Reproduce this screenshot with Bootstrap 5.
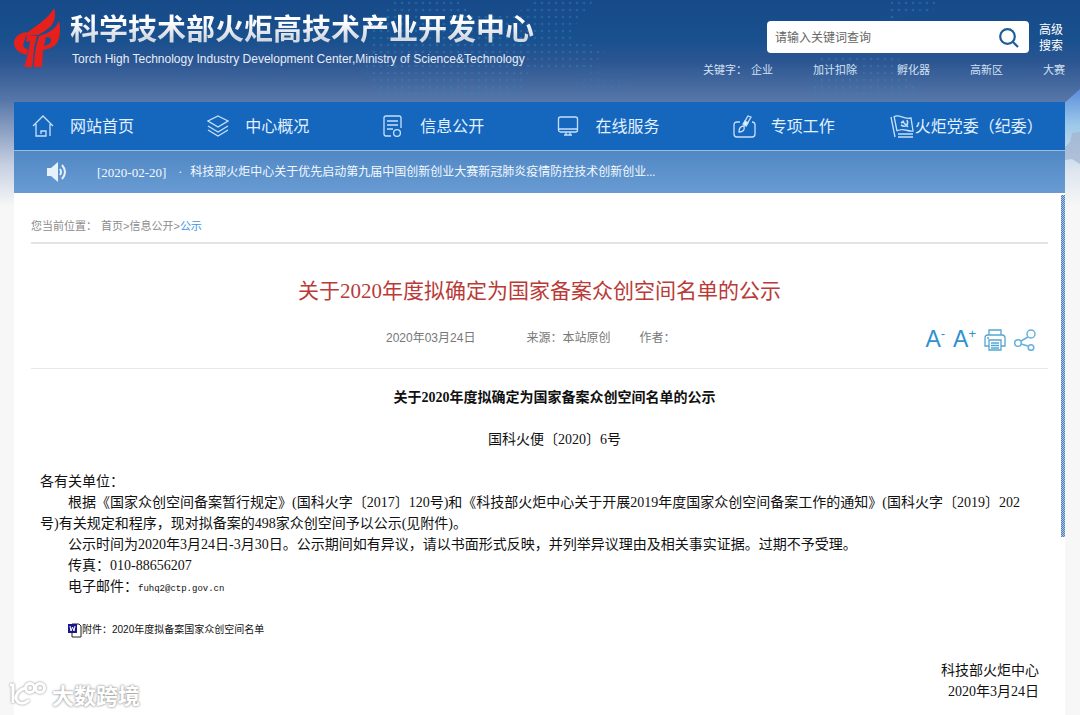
<!DOCTYPE html>
<html lang="zh-CN">
<head>
<meta charset="utf-8">
<meta name="viewport" content="width=device-width, initial-scale=1">
<title>关于2020年度拟确定为国家备案众创空间名单的公示</title>
<link rel="stylesheet" href="https://cdn.jsdelivr.net/npm/bootstrap@5.3.0/dist/css/bootstrap.min.css">
<style>
body{background:#f7f7f7;font-family:"Liberation Serif","Noto Sans CJK SC",serif;font-size:14px;line-height:21px;color:#111;overflow-x:hidden}
a{color:inherit;text-decoration:none}
.sky{background:linear-gradient(#174a88 0,#19508e 40px,#2c5692 62px,#5676a8 100px,#8b9fc3 130px,#c6d0e1 165px,#f7f7f7 207px)}
.sky-map{position:absolute;top:0;left:0;width:100%;height:102px;z-index:0}
.globe{position:absolute;top:85px;right:0;width:20px;height:122px}
.site{margin:0 15px 0 14px;position:relative}
.masthead{height:102px;color:#fff}
.sans{font-family:"Liberation Sans","Noto Sans CJK SC",sans-serif}
.brand-name{font:bold 29px/38px "Noto Sans CJK SC",sans-serif;background:linear-gradient(#fff 35%,#d3d9e2 80%);-webkit-background-clip:text;background-clip:text;color:transparent;margin:0;white-space:nowrap}
.brand-en{font-size:12px;line-height:16px;color:#e4edf8;margin:5px 0 0 2px;white-space:nowrap}
.brand-text{padding:8px 0 0 8px}
.brand-logo{margin-top:8px}
.find{width:262px;height:32px;background:#fff;border-radius:4px}
.find input{border:0;outline:0;background:transparent;font-size:12px;min-width:0;padding:2px 8px 0;color:#555}
.find input::placeholder{color:#666;opacity:1}
.find button{border:0;background:none;padding:0 10px}
.adv{font-size:12px;line-height:16px;margin:1px 2px 0 10px;flex:none}
.keys{font-size:11px;line-height:16px;gap:40px;color:#d5e2f2;white-space:nowrap;margin-top:8px}
.find-area{padding-top:21px}
.mainnav{background:#1567be;height:48px;font-size:16px;color:#e2f0ff}
.mainnav a{height:48px;padding-left:18px;white-space:nowrap}
.mainnav svg{flex:none;margin-right:16px}
.mainnav .wide svg{margin-right:14px}
.mainnav .party{padding-left:0}
.mainnav .party svg{margin-right:1px}
.line{fill:none;stroke:#c7e0fa;stroke-width:1.3}
.ticker{background:linear-gradient(#5088c4,#699bd3);border-top:1px solid #98bee6;height:43px;font-size:12px;color:#f4f9ff;padding-left:32px}
.ticker time{margin:0 12px 0 29px;font-size:13px}
.panel{background:#fff;padding:0 17px 0 17px;min-height:522px}
.side{position:absolute;right:0;top:2px;width:4px;height:342px;background:repeating-conic-gradient(#4c80bd 0 25%,#a9c5e2 0 50%) 0 0/2px 2px}
.crumbs{font-size:11px;line-height:16px;color:#8b8b8b;padding:25px 0 8px;border-bottom:2px solid #e3e3e3}
.crumbs .here{color:#3b95e0}
.headline{font-size:21px;line-height:30px;font-weight:400;color:#b93b38;margin:32px 0 16px}
.meta{font-size:12px;line-height:32px;color:#777;padding-bottom:14px;border-bottom:1px solid #e8e8e8}
.meta .when{margin-left:355px}
.meta .from{margin:0 29px 0 51px}
.tools{margin-right:12px;padding-top:2px}
.tools button{border:0;background:none;padding:0;line-height:24px}
.tools .sz{font-size:23px;color:#2f92d0}
.tools sup{font-size:13px;top:-9px}
.article{padding:18px 9px 0}
.article p{margin:0}
.article .para{text-indent:28px;padding-right:4px}
.centred{text-align:center;padding-left:30px}
.doc-title{font-size:14px;line-height:21px;font-weight:bold;margin:0 0 21px}
.article .salute{margin-top:21px}
.mail{font:9px "Liberation Mono",monospace}
.article .attach{font-size:10px;padding-left:28px;margin-top:22px}
.water{position:absolute;left:8px;top:678px;color:#fff;font:bold 22px/32px "Noto Sans CJK SC",sans-serif;text-shadow:0 0 2px #999,0 0 3px #aaa;pointer-events:none}
.water svg{filter:drop-shadow(0 0 1px #888)}
</style>
</head>
<body class="position-relative">
<div class="sky">
<svg class="sky-map" aria-hidden="true"><defs><pattern id="dots" width="7" height="7" patternUnits="userSpaceOnUse"><circle cx="3" cy="3" r="1.3" fill="#2e8ac8"/></pattern></defs>
<g fill="url(#dots)" opacity=".4"><path d="M395 0h62l20 16 45-6 12-10h60l-22 30 4 12 32 6-18 20h-60l-10 30H380l-15-30 8-40z"/><path d="M890 0h50l-8 12h-24l-22 10zM820 54h76l16 28 8 20H812z"/><path d="M590 66h14v12h22v20h-56z" opacity=".5"/></g></svg>
<svg class="globe" viewBox="0 0 20 122" preserveAspectRatio="none" aria-hidden="true"><defs><linearGradient id="g" x1="0" y1="0" x2="0" y2="1"><stop offset="0" stop-color="#5c8ddb"/><stop offset=".3" stop-color="#9bc8e9"/><stop offset=".7" stop-color="#dfe6ef"/><stop offset="1" stop-color="#f7f7f7"/></linearGradient></defs><path d="M0 22 20 4v118H0z" fill="url(#g)"/><path d="M5 62l5-5 2-9 8-1v32l-8-5-7 1z" fill="#a3b2cd" opacity=".7"/></svg>
<div class="site">
<header class="masthead d-flex justify-content-between">
  <div class="d-flex align-items-start">
    <svg class="brand-logo" width="48" height="60" viewBox="0 0 48 60" aria-hidden="true"><g fill="#e8201c"><path d="M40 0C42 7 41 13 37 18 33 22 28 25 24 27L12 28 13 25C18 20 34 12 40 0z"/><path d="M13 24C5 25 0 29 0 35c0 5 4 10 13 12l1-6c-4 0-6-3-4-7 1-3 2-5 3-10z"/><path d="M13 28h11c-2 4-3 8-4 13l-1 18h-9c3-8 5-16 6-26l-4 1z"/><path d="M45 13c2 8 1 17-2 22-3 4-8 6-14 7l-1 17h-8c0-11 2-22 5-31 8-2 17-7 20-15zM32 29l-2 9c5-1 7-3 7-6 0-2-2-3-5-3z" fill-rule="evenodd"/></g><path d="M24 27c-3 8-4 18-5 32" stroke="#254f8d" fill="none"/></svg>
    <div class="brand-text"><h1 class="brand-name">科学技术部火炬高技术产业开发中心</h1><p class="brand-en sans">Torch High Technology Industry Development Center,Ministry of Science&amp;Technology</p></div>
  </div>
  <div class="find-area sans">
    <div class="d-flex justify-content-end">
      <form class="find d-flex" role="search"><input class="flex-grow-1" type="text" placeholder="请输入关键词查询" aria-label="请输入关键词查询"><button type="button" aria-label="搜索"><svg width="20" height="20" viewBox="0 0 20 20" fill="none" stroke="#1a5f9c" stroke-width="2.2"><circle cx="8.5" cy="8.5" r="7.3"/><path d="m14 14 5 5"/></svg></button></form>
      <a href="#" class="adv">高级<br>搜索</a>
    </div>
    <div class="keys d-flex"><span>关键字：<a href="#" class="ms-1">企业</a></span><a href="#">加计扣除</a><a href="#">孵化器</a><a href="#">高新区</a><a href="#">大赛</a></div>
  </div>
</header>
<nav class="mainnav row row-cols-6 g-0">
  <a href="#" class="col d-flex align-items-center"><svg class="line" width="22" height="24" viewBox="0 0 22 24"><path d="M1 12 11 2l10 10M4 10v12h10v-5H9v3M18 10v12"/></svg>网站首页</a>
  <a href="#" class="col d-flex align-items-center"><svg class="line" width="22" height="24" viewBox="0 0 22 24"><path d="m11 2 10 5-10 6L1 7zM1 12l10 6 10-6M1 16l10 6 10-6"/></svg>中心概况</a>
  <a href="#" class="col d-flex align-items-center"><svg class="line" width="22" height="24" viewBox="0 0 22 24"><path d="M9 22H4q-2 0-2-2V4q0-2 2-2h13q2 0 2 2v10M5 7h11M5 11h11M5 15h6"/><circle cx="15" cy="19" r="3.4"/></svg>信息公开</a>
  <a href="#" class="col d-flex align-items-center"><svg class="line" width="22" height="24" viewBox="0 0 22 24"><rect x="1.500" y="3" width="19" height="15" rx="2"/><path d="M2 15h18M9 18v3M13 18v3M7 21h8"/></svg>在线服务</a>
  <a href="#" class="wide col d-flex align-items-center"><svg class="line" width="24" height="24" viewBox="0 0 24 24"><path d="M7 8H4q-3 0-3 3v9q0 3 3 3h15q3 0 3-3v-9q0-3-3-3M6 18c0-4 2-6 5-6 1 4-1 6-5 6zM11 12l2-3"/><path d="m12 7 3-5 3 1-4 7z" /><path d="m12 7-2 3 3 2 2-3z" fill="#e7f4ff"/></svg>专项工作</a>
  <a href="#" class="party col d-flex align-items-center"><svg class="line" width="24" height="25" viewBox="0 0 24 25"><path d="m1 3 4 20M4 2l3 15M4 3c5-4 9 3 17 1l2 13c-6 1-10-4-16 0M8 20h15M8 23h15"/><path d="m11 9 3-2M12 7l6 6M17 6c2 5-2 8-6 5" stroke-width="1.600"/></svg>火炬党委（纪委）</a>
</nav>
<div class="ticker d-flex align-items-center"><svg width="22" height="20" viewBox="0 0 22 20"><path d="M1 6h4l7-6v20l-7-6H1z" fill="#e6f1fc"/><path d="M14 7q2 3 0 6M16 3q6 7 0 14" fill="none" stroke="#e6f1fc" stroke-width="2"/></svg><time>[2020-02-20]</time><span>·</span><a href="#" class="ms-2 text-truncate">科技部火炬中心关于优先启动第九届中国创新创业大赛新冠肺炎疫情防控技术创新创业...</a></div>
<main class="panel position-relative">
  <div class="side"></div>
  <nav class="crumbs sans" aria-label="当前位置"><span>您当前位置：</span><a href="#" class="ms-1">首页</a>&gt;<a href="#">信息公开</a>&gt;<a href="#" class="here">公示</a></nav>
  <h2 class="headline text-center">关于2020年度拟确定为国家备案众创空间名单的公示</h2>
  <div class="meta sans d-flex align-items-center">
    <span class="when">2020年03月24日</span><span class="from">来源：本站原创</span><span>作者：</span>
    <div class="tools d-flex align-items-center gap-2 ms-auto">
      <button type="button" class="sz" aria-label="缩小字号">A<sup>-</sup></button><button type="button" class="sz" aria-label="放大字号">A<sup>+</sup></button>
      <button type="button" aria-label="打印"><svg width="22" height="22" viewBox="0 0 22 22" fill="none" stroke="#55a5d4" stroke-width="1.300"><path d="M5 6V1h12v5M5 17H1V9q0-3 3-3h14q3 0 3 3v8h-4M5 11h12v10H5zM7 14h8M7 16.500h8M7 19h8M3 9h2"/></svg></button>
      <button type="button" aria-label="分享"><svg width="22" height="22" viewBox="0 0 22 22" fill="none" stroke="#67b0de" stroke-width="1.500"><circle cx="17" cy="5" r="4"/><circle cx="4" cy="14" r="3.300"/><circle cx="17" cy="18.500" r="2.800"/><path d="m7 12 7-4M7 15l7 2"/></svg></button>
    </div>
  </div>
  <article class="article">
    <h3 class="doc-title centred">关于2020年度拟确定为国家备案众创空间名单的公示</h3>
    <p class="centred">国科火便〔2020〕6号</p>
    <p class="salute">各有关单位：</p>
    <p class="para">根据《国家众创空间备案暂行规定》(国科火字〔2017〕120号)和《科技部火炬中心关于开展2019年度国家众创空间备案工作的通知》(国科火字〔2019〕202号)有关规定和程序，现对拟备案的498家众创空间予以公示(见附件)。</p>
    <p class="para">公示时间为2020年3月24日-3月30日。公示期间如有异议，请以书面形式反映，并列举异议理由及相关事实证据。过期不予受理。</p>
    <p class="para">传真：010-88656207</p>
    <p class="para">电子邮件：<a href="#" class="mail">fuhq2@ctp.gov.cn</a></p>
    <p class="attach sans"><a href="#"><svg width="14" height="15" viewBox="0 0 14 15"><path d="M4 1h7l2 2v11H4z" fill="#fff" stroke="#222"/><path d="M0 1h9v9H0z" fill="#181889"/><path d="m2 3 1 5 1.500-4L6 8l1-5" fill="none" stroke="#fff"/></svg>附件：2020年度拟备案国家众创空间名单</a></p>
    <div class="text-end mt-3 pt-1">科技部火炬中心<br>2020年3月24日</div>
  </article>
</main>
</div>
</div>
<div class="water d-flex align-items-center"><svg width="40" height="30" viewBox="0 0 40 30" fill="none" stroke="#fff" stroke-width="3"><path d="M2 6h3v18M17 9C11 11 8 15 8 19c1 6 8 7 13 2"/><circle cx="22" cy="9" r="4.500"/><circle cx="32" cy="9" r="4.500"/></svg><span class="ms-1">大数跨境</span></div>
<script src="https://cdn.jsdelivr.net/npm/bootstrap@5.3.0/dist/js/bootstrap.bundle.min.js"></script>
</body>
</html>
